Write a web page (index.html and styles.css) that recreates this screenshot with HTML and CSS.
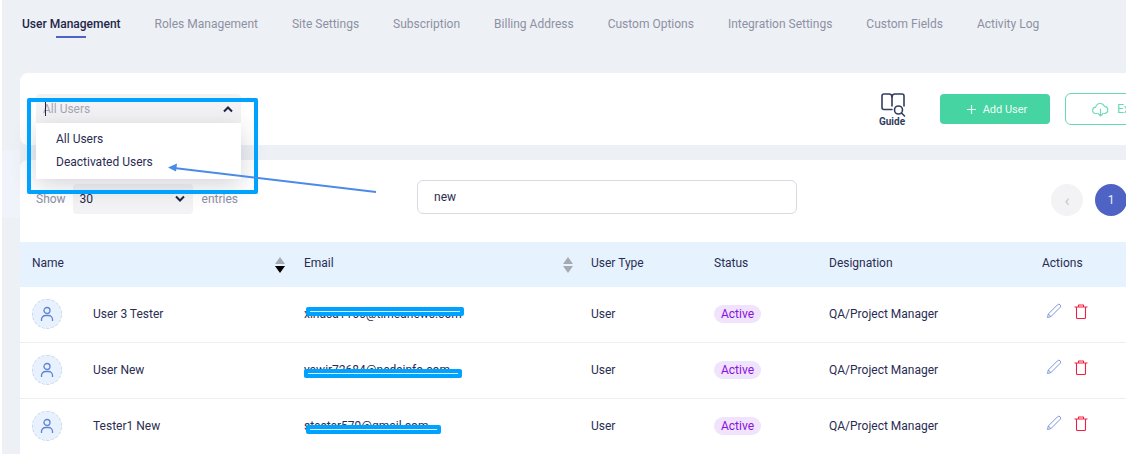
FILE: index.html
```html
<!DOCTYPE html>
<html lang="en">
<head>
<meta charset="utf-8">
<title>User Management</title>
<link rel="stylesheet" href="styles.css">
</head>
<body>
<div class="page">
  <nav class="tabs">
    <a class="tab active">User Management</a>
    <a class="tab">Roles Management</a>
    <a class="tab">Site Settings</a>
    <a class="tab">Subscription</a>
    <a class="tab">Billing Address</a>
    <a class="tab">Custom Options</a>
    <a class="tab">Integration Settings</a>
    <a class="tab">Custom Fields</a>
    <a class="tab">Activity Log</a>
  </nav>

  <section class="card top-card">
    <div class="user-filter">
      <span class="caret"></span>
      <span class="filter-value">All Users</span>
      <svg class="chev" width="12" height="8" viewBox="0 0 12 8"><path d="M2 6.5 6 2.5l4 4" fill="none" stroke="#1f2540" stroke-width="2"/></svg>
      <ul class="filter-menu">
        <li>All Users</li>
        <li>Deactivated Users</li>
      </ul>
    </div>
    <div class="guide">
      <svg width="25" height="24" viewBox="0 0 25 24" fill="none" stroke="#333d5e" stroke-width="1.6" stroke-linecap="round" stroke-linejoin="round">
        <path d="M11 16.5H3a2 2 0 0 1-2-2V3a2 2 0 0 1 2-2h5a3 3 0 0 1 3 3v9"/>
        <path d="M11 4a3 3 0 0 1 3-3h7a2 2 0 0 1 2 2v10"/>
        <circle cx="17.5" cy="17" r="4"/>
        <path d="m20.5 20 3 3"/>
      </svg>
      <span>Guide</span>
    </div>
    <button class="btn-add">
      <svg width="11" height="11" viewBox="0 0 11 11"><path d="M5.5 1v9M1 5.5h9" stroke="#e6fbf3" stroke-width="1.2"/></svg>
      Add User
    </button>
    <button class="btn-export">
      <svg width="17" height="15" viewBox="0 0 17 15" fill="none" stroke="#6fdcb8" stroke-width="1.1" stroke-linecap="round" stroke-linejoin="round">
        <path d="M5 11.5H4a3.2 3.2 0 0 1-.3-6.4A4.6 4.6 0 0 1 12.5 4.400a3.600 3.600 0 0 1 .5 7.100h-1"/>
        <path d="M8.500 7v7M6 11.500l2.500 2.500 2.500-2.500"/>
      </svg>
      Export
    </button>
  </section>

  <section class="card list-card">
    <div class="toolbar">
      <div class="entries">
        <span class="muted">Show</span>
        <div class="entries-select">
          <span>30</span>
          <svg width="12" height="8" viewBox="0 0 12 8"><path d="M2 1.500l4 4 4-4" fill="none" stroke="#1f2540" stroke-width="2"/></svg>
        </div>
        <span class="muted">entries</span>
      </div>
      <div class="search">new</div>
      <div class="pager">
        <span class="page-btn prev">‹</span>
        <span class="page-btn current">1</span>
      </div>
    </div>

    <table class="users">
      <colgroup>
        <col class="c-name"><col class="c-email"><col class="c-type"><col class="c-status"><col class="c-desig"><col class="c-actions">
      </colgroup>
      <thead>
        <tr>
          <th class="th-name"><div class="sortable">Name
            <svg width="10" height="16" viewBox="0 0 10 16"><path d="M5 0l5 7H0z" fill="#a4a9b3"/><path d="M0 9h10l-5 7z" fill="#000"/></svg>
          </div></th>
          <th><div class="sortable">Email
            <svg width="10" height="16" viewBox="0 0 10 16"><path d="M5 0l5 7H0z" fill="#a4a9b3"/><path d="M0 9h10l-5 7z" fill="#a4a9b3"/></svg>
          </div></th>
          <th>User Type</th>
          <th>Status</th>
          <th>Designation</th>
          <th>Actions</th>
        </tr>
      </thead>
      <tbody>
        <tr>
          <td><div class="person"><span class="avatar"><svg width="14" height="16" viewBox="0 0 14 16" fill="none" stroke="#5f82d2" stroke-width="1.300"><circle cx="7" cy="4.500" r="3"/><path d="M1.500 15v-1.500a4 4 0 0 1 4-4h3a4 4 0 0 1 4 4V15"/></svg></span>User 3 Tester</div></td>
          <td><span class="email">xinasa1166@timeanews.com<i class="scribble s1"></i></span></td>
          <td>User</td>
          <td><span class="badge">Active</span></td>
          <td>QA/Project Manager</td>
          <td><div class="actions">
            <svg width="16" height="16" viewBox="0 0 16 16" fill="none" stroke="#7d97dc" stroke-width="1" stroke-linejoin="round"><path d="M1.500 14.500l.8-3.500L11.500 1.800a1.800 1.800 0 0 1 2.600 2.600L4.900 13.600z"/><path d="M2.300 11l2.600 2.600"/></svg>
            <svg width="14" height="15" viewBox="0 0 14 15" fill="none" stroke="#ee1f3f" stroke-width="1.100" stroke-linejoin="round"><path d="M.5 3h13M4.500 3V1h5v2M2.500 3v10.500a1 1 0 0 0 1 1h7a1 1 0 0 0 1-1V3"/></svg>
          </div></td>
        </tr>
        <tr>
          <td><div class="person"><span class="avatar"><svg width="14" height="16" viewBox="0 0 14 16" fill="none" stroke="#5f82d2" stroke-width="1.300"><circle cx="7" cy="4.500" r="3"/><path d="M1.500 15v-1.500a4 4 0 0 1 4-4h3a4 4 0 0 1 4 4V15"/></svg></span>User New</div></td>
          <td><span class="email">yawir72684@nedsinfo.com<i class="scribble s2"></i></span></td>
          <td>User</td>
          <td><span class="badge">Active</span></td>
          <td>QA/Project Manager</td>
          <td><div class="actions">
            <svg width="16" height="16" viewBox="0 0 16 16" fill="none" stroke="#7d97dc" stroke-width="1" stroke-linejoin="round"><path d="M1.500 14.500l.8-3.500L11.500 1.800a1.800 1.800 0 0 1 2.600 2.600L4.900 13.600z"/><path d="M2.300 11l2.600 2.600"/></svg>
            <svg width="14" height="15" viewBox="0 0 14 15" fill="none" stroke="#ee1f3f" stroke-width="1.100" stroke-linejoin="round"><path d="M.5 3h13M4.500 3V1h5v2M2.500 3v10.500a1 1 0 0 0 1 1h7a1 1 0 0 0 1-1V3"/></svg>
          </div></td>
        </tr>
        <tr>
          <td><div class="person"><span class="avatar"><svg width="14" height="16" viewBox="0 0 14 16" fill="none" stroke="#5f82d2" stroke-width="1.300"><circle cx="7" cy="4.500" r="3"/><path d="M1.500 15v-1.500a4 4 0 0 1 4-4h3a4 4 0 0 1 4 4V15"/></svg></span>Tester1 New</div></td>
          <td><span class="email">stester579@gmail.com<i class="scribble s3"></i></span></td>
          <td>User</td>
          <td><span class="badge">Active</span></td>
          <td>QA/Project Manager</td>
          <td><div class="actions">
            <svg width="16" height="16" viewBox="0 0 16 16" fill="none" stroke="#7d97dc" stroke-width="1" stroke-linejoin="round"><path d="M1.500 14.500l.8-3.500L11.500 1.800a1.800 1.800 0 0 1 2.600 2.600L4.900 13.600z"/><path d="M2.300 11l2.600 2.600"/></svg>
            <svg width="14" height="15" viewBox="0 0 14 15" fill="none" stroke="#ee1f3f" stroke-width="1.100" stroke-linejoin="round"><path d="M.5 3h13M4.500 3V1h5v2M2.500 3v10.500a1 1 0 0 0 1 1h7a1 1 0 0 0 1-1V3"/></svg>
          </div></td>
        </tr>
      </tbody>
    </table>
  </section>

  <div class="highlight"></div>
  <svg class="arrow" width="220" height="40" viewBox="0 0 220 40">
    <path d="M216 33 14 9" stroke="#4a8be8" stroke-width="1.800" fill="none"/>
    <path d="M8 8.500 17 4.500 16 12.500z" fill="#4a8be8"/>
  </svg>
</div>
</body>
</html>
```

FILE: styles.css
```css
* { box-sizing: border-box; }

html, body {
  margin: 0;
  padding: 0;
  overflow: hidden;
  background: #fff;
}

.page {
  position: relative;
  width: 1126px;
  height: 454px;
  overflow: hidden;
  margin: 0;
  border-left: 2px solid #fff;
  background: #edf0f4;
  font-family: Roboto, "Liberation Sans", sans-serif;
  font-size: 12px;
  color: #2a2c52;
}

.page::before {
  content: "";
  position: absolute;
  left: 0;
  top: 150px;
  width: 18px;
  height: 68px;
  background: #f0f4fa;
}

/* tabs */
.tabs {
  display: flex;
  gap: 34px;
  height: 73px;
  padding: 17px 0 0 20px;
  white-space: nowrap;
}

.tab {
  position: relative;
  height: 14px;
  line-height: 14px;
  color: #8d90a4;
}

.tab.active {
  color: #23264a;
  font-weight: 500;
}

.tab.active::after {
  content: "";
  position: absolute;
  left: 34px;
  top: 19px;
  width: 30px;
  height: 2px;
  background: #4f63c4;
}

/* cards */
.card {
  position: relative;
  width: 1300px;
  margin-left: 18px;
  background: #fff;
  border-radius: 8px;
}

.top-card {
  display: flex;
  align-items: flex-start;
  height: 72px;
  padding: 20px 0 0 16px;
  z-index: 1;
}

.user-filter {
  position: relative;
  display: flex;
  align-items: center;
  justify-content: space-between;
  flex: none;
  width: 205px;
  height: 29px;
  margin: 1px 639px 0 0;
  padding: 0 7px;
  border-radius: 4px 4px 0 0;
  background: #f3f3f5;
}

.caret {
  position: absolute;
  left: 9px;
  top: 7px;
  width: 1px;
  height: 15px;
  background: #23264a;
}

.filter-value { color: #a3a6b4; }

.filter-menu {
  position: absolute;
  left: 0;
  top: 29px;
  width: 205px;
  height: 56px;
  margin: 0;
  padding: 5px 0 0 20px;
  list-style: none;
  background: #fff;
  box-shadow: 0 6px 24px rgba(40, 45, 70, .2);
  color: #2a2c52;
}

.filter-menu li {
  height: 23px;
  line-height: 23px;
}

.guide {
  display: flex;
  flex-direction: column;
  align-items: center;
  flex: none;
  width: 26px;
  color: #333d5e;
  font-size: 10px;
  font-weight: 700;
}

.guide span {
  line-height: 11px;
  margin: -1px 0 0 -2px;
}

.btn-add,
.btn-export {
  display: flex;
  align-items: center;
  flex: none;
  font: inherit;
}

.btn-add {
  justify-content: center;
  gap: 6px;
  width: 110px;
  height: 30px;
  margin: 1px 0 0 34px;
  padding: 0 0 0 3px;
  border: 0;
  border-radius: 4px;
  background: #45d4a2;
  color: #f0fdf8;
  font-size: 11px;
}

.btn-export {
  gap: 8px;
  width: 120px;
  height: 32px;
  margin-left: 15px;
  padding: 0 0 0 26px;
  border: 1.500px solid #66dab3;
  border-radius: 6px;
  background: #fff;
  color: #66dab3;
}

.list-card {
  margin-top: 15px;
  height: 320px;
}

/* toolbar */
.toolbar {
  display: flex;
  align-items: flex-start;
  height: 82px;
  padding: 20px 0 0 16px;
}

.entries {
  display: flex;
  align-items: center;
  gap: 8px;
  flex: none;
  width: 381px;
  height: 34px;
}

.entries-select {
  display: flex;
  align-items: center;
  justify-content: space-between;
  width: 120px;
  height: 30px;
  margin: 4px 1px 0 -1px;
  padding: 0 7px;
  border-radius: 4px;
  background: #f3f3f5;
  color: #23264a;
}

.muted { color: #8d90a4; margin-top: 4px; }

.search {
  flex: none;
  width: 380px;
  height: 34px;
  padding: 0 16px;
  line-height: 32px;
  border: 1px solid #d9d9e2;
  border-radius: 6px;
  color: #2a2c52;
}

.pager {
  display: flex;
  gap: 12px;
  margin: 4px 0 0 254px;
}

.page-btn {
  display: flex;
  align-items: center;
  justify-content: center;
  width: 32px;
  height: 32px;
  border-radius: 50%;
}

.page-btn.prev {
  background: #f3f3f5;
  color: #c2c4ce;
  font-size: 17px;
}

.page-btn.current {
  background: #4f63c4;
  color: #e8f0ff;
}

/* table */
.users {
  table-layout: fixed;
  width: 1300px;
  border-collapse: separate;
  border-spacing: 0;
}

.c-name { width: 272px; }
.c-email { width: 287px; }
.c-type { width: 123px; }
.c-status { width: 115px; }
.c-desig { width: 213px; }
.c-actions { width: 290px; }

.users th {
  height: 45px;
  padding: 0 0 4px 12px;
  background: #e6f3fe;
  font-weight: 400;
  text-align: left;
  color: #2a2c52;
}

.sortable svg { margin-top: 4px; }

.users td {
  height: 56px;
  padding: 0 0 1px 12px;
  border-bottom: 1px solid #eceef1;
}

.sortable {
  display: flex;
  align-items: center;
  justify-content: space-between;
  padding-right: 6px;
}

.th-name .sortable { padding-right: 7px; }

.person {
  display: flex;
  align-items: center;
  gap: 31px;
}

.avatar {
  display: flex;
  align-items: center;
  justify-content: center;
  width: 30px;
  height: 30px;
  border: 1px dashed #c8d6ea;
  border-radius: 50%;
  background: #e8f2fe;
}

.email { position: relative; display: inline-block; }

.scribble {
  position: absolute;
  height: 9px;
  border-radius: 2px;
  background: #00a2ff;
}

.scribble::after {
  content: "";
  position: absolute;
  left: 4px;
  right: 4px;
  top: 4px;
  height: 1px;
  background: rgba(255, 255, 255, .85);
}

.s1 { left: 2px; top: 0; width: 158px; }
.s2 { left: 0; top: 6px; width: 158px; }
.s3 { left: 2px; top: 6px; width: 135px; }

.badge {
  display: inline-block;
  height: 18px;
  padding: 0 7px;
  line-height: 18px;
  border-radius: 9px;
  background: #f0e3fc;
  color: #8a0fe0;
}

.actions {
  display: flex;
  align-items: center;
  gap: 12px;
  margin: -6px 0 0 4px;
}

/* annotation overlay */
.highlight {
  position: absolute;
  left: 25px;
  top: 98px;
  width: 231px;
  height: 96px;
  border: 4px solid #00a2ff;
  border-radius: 2px;
  z-index: 2;
}

.arrow {
  position: absolute;
  left: 158px;
  top: 159px;
  z-index: 2;
}
```
